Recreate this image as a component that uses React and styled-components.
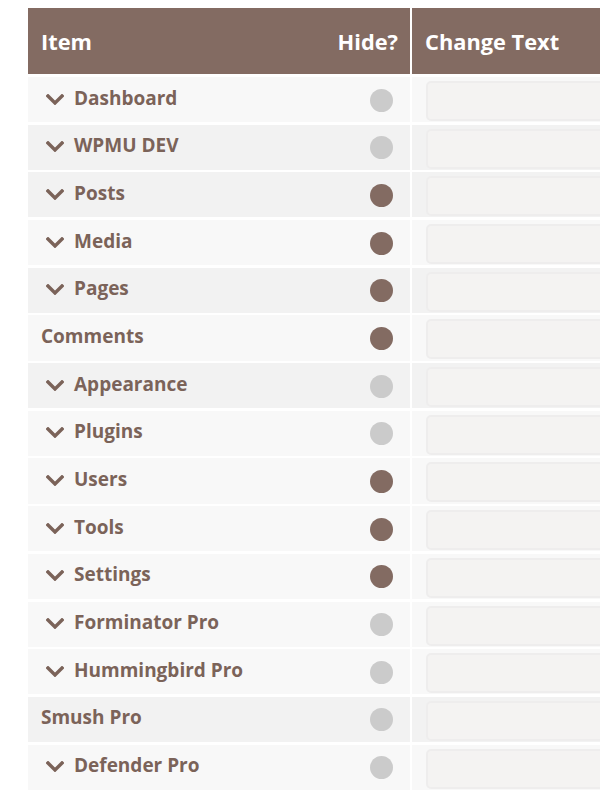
import React from "react";
import styled, { createGlobalStyle } from "styled-components";

const Global = createGlobalStyle`
  html, body { margin: 0; padding: 0; background: #ffffff; overflow: hidden; }
  body { font-family: "Open Sans", "Noto Sans", sans-serif; }
`;

const BROWN = "#836b62";
const TEXT = "#7b6359";

const Page = styled.div`
  width: 600px;
  overflow: hidden;
  padding: 8px 0 0 28px;
  box-sizing: border-box;
`;

const Table = styled.div`
  display: grid;
  grid-template-columns: 382px 320px;
  column-gap: 2px;
  row-gap: 2.6px;
`;

const HeadCell = styled.div`
  height: 66.4px;
  background: ${BROWN};
  color: #ffffff;
  font-weight: 700;
  font-size: 21.8px;
  display: flex;
  align-items: center;
  justify-content: space-between;
  padding: 0 12px 0 13px;
  box-sizing: border-box;
`;

const ItemCell = styled.div`
  height: 45.1px;
  background: ${(p) => (p.$dark ? "#f2f2f2" : "#f8f8f8")};
  display: flex;
  align-items: center;
  justify-content: space-between;
  padding: 0 17px 0 ${(p) => (p.$sub ? "18px" : "13px")};
  box-sizing: border-box;
`;

const Label = styled.div`
  display: flex;
  align-items: center;
  gap: 10px;
  color: ${TEXT};
  font-weight: 700;
  font-size: 19px;
  line-height: 1;
  padding-bottom: 3px;
`;

const Chevron = styled.svg`
  width: 18px;
  height: 11px;
  flex: none;
  margin-top: 2px;
`;

const Toggle = styled.span`
  width: 23px;
  height: 23px;
  border-radius: 50%;
  background: ${(p) => (p.$on ? BROWN : "#cbcbcb")};
  margin-top: 1px;
`;

const InputCell = styled.div`
  height: 45.1px;
  background: ${(p) => (p.$dark ? "#f2f2f2" : "#f8f8f8")};
  padding: 4px 0 0 14px;
  box-sizing: border-box;
`;

const Field = styled.div`
  height: 40px;
  border: 2px solid #eeeded;
  border-radius: 5px;
  background: #f4f3f2;
  box-sizing: border-box;
`;

const rows = [
  { name: "Dashboard", sub: true, on: false, dark: false },
  { name: "WPMU DEV", sub: true, on: false, dark: true },
  { name: "Posts", sub: true, on: true, dark: true },
  { name: "Media", sub: true, on: true, dark: false },
  { name: "Pages", sub: true, on: true, dark: true },
  { name: "Comments", sub: false, on: true, dark: false },
  { name: "Appearance", sub: true, on: false, dark: true },
  { name: "Plugins", sub: true, on: false, dark: false },
  { name: "Users", sub: true, on: true, dark: false },
  { name: "Tools", sub: true, on: true, dark: false },
  { name: "Settings", sub: true, on: true, dark: false },
  { name: "Forminator Pro", sub: true, on: false, dark: false },
  { name: "Hummingbird Pro", sub: true, on: false, dark: false },
  { name: "Smush Pro", sub: false, on: false, dark: true },
  { name: "Defender Pro", sub: true, on: false, dark: false },
];

const Down = () => (
  <Chevron viewBox="0 0 18 11">
    <polyline
      points="2,2 9,9 16,2"
      fill="none"
      stroke={TEXT}
      strokeWidth="3.4"
      strokeLinecap="square"
    />
  </Chevron>
);

export default function App() {
  return (
    <Page>
      <Global />
      <Table>
        <HeadCell>
          <span>Item</span>
          <span>Hide?</span>
        </HeadCell>
        <HeadCell>
          <span>Change Text</span>
        </HeadCell>
        {rows.map((r) => (
          <React.Fragment key={r.name}>
            <ItemCell $dark={r.dark} $sub={r.sub}>
              <Label>
                {r.sub && <Down />}
                {r.name}
              </Label>
              <Toggle $on={r.on} />
            </ItemCell>
            <InputCell $dark={r.dark}>
              <Field />
            </InputCell>
          </React.Fragment>
        ))}
      </Table>
    </Page>
  );
}
